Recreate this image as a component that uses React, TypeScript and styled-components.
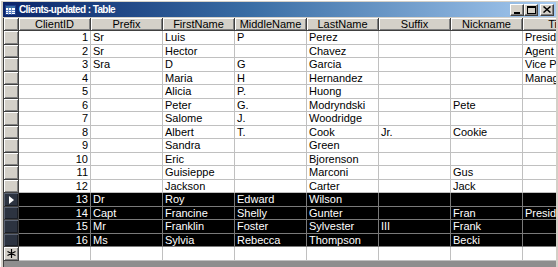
import { createGlobalStyle, styled } from "styled-components";

const GlobalStyle = createGlobalStyle`
  html, body {
    margin: 0;
    padding: 0;
    background: #d4d0c8;
  }
  body {
    font-family: "Liberation Sans", Arial, sans-serif;
    font-size: 11px;
  }
`;

const COLS = "15px repeat(8, 72px)";

const Window = styled.div`
  width: 558px;
  height: 267px;
  box-sizing: border-box;
  padding: 1px 2px 0 2px;
  background: #d4d0c8;
  border-top: 1px solid #ffffff;
  border-left: 1px solid #ffffff;
  display: flex;
  flex-direction: column;
  overflow: hidden;
`;

const TitleBar = styled.div`
  height: 15px;
  flex-shrink: 0;
  display: flex;
  align-items: center;
  padding: 0 2px 0 2px;
  background: linear-gradient(90deg, #0a246a 0%, #3a6ea5 45%, #a6caf0 100%);
  color: #ffffff;
`;

const TitleText = styled.span`
  font-weight: bold;
  font-size: 10px;
  letter-spacing: -0.6px;
  margin-left: 3px;
  white-space: nowrap;
`;

const TitleButtons = styled.div`
  margin-left: auto;
  display: flex;
`;

const WinButton = styled.div<{ $gap?: boolean }>`
  width: 14px;
  height: 12px;
  box-sizing: border-box;
  margin-left: ${(p) => (p.$gap ? "2px" : "0")};
  background: #d4d0c8;
  border-top: 1px solid #ffffff;
  border-left: 1px solid #ffffff;
  border-right: 1px solid #404040;
  border-bottom: 1px solid #404040;
  box-shadow: inset -1px -1px #808080;
  display: flex;
  align-items: center;
  justify-content: center;
`;

const Sheet = styled.div`
  margin-top: 1px;
  flex: 1;
  overflow: hidden;
  background: #8e8e8e;
  border-left: 1px solid #404040;
`;

const Row = styled.div<{ $tall: boolean }>`
  display: grid;
  grid-template-columns: ${COLS};
  height: ${(p) => (p.$tall ? "14px" : "13px")};
`;

const HeaderCell = styled.div`
  box-sizing: border-box;
  background: #d4d0c8;
  border-right: 1px solid #404040;
  border-bottom: 1px solid #404040;
  box-shadow: inset 1px 1px #ffffff, inset -1px -1px #808080;
  text-align: center;
  line-height: 12px;
  color: #000000;
  white-space: nowrap;
  overflow: hidden;
`;

const Selector = styled.div<{ $dark?: boolean }>`
  box-sizing: border-box;
  background: ${(p) => (p.$dark ? "#2c3340" : "#d4d0c8")};
  border-right: 1px solid #404040;
  border-bottom: 1px solid #404040;
  box-shadow: ${(p) =>
    p.$dark
      ? "inset 1px 1px #5a6272, inset -1px -1px #1a1e26"
      : "inset 1px 1px #ffffff, inset -1px -1px #808080"};
  display: flex;
  align-items: center;
  justify-content: center;
`;

const Cell = styled.div<{ $dark?: boolean; $num?: boolean }>`
  box-sizing: border-box;
  background: ${(p) => (p.$dark ? "#000000" : "#ffffff")};
  color: ${(p) => (p.$dark ? "#ffffff" : "#000000")};
  border-right: 1px solid ${(p) => (p.$dark ? "#7a7a7a" : "#c0c0c0")};
  border-bottom: 1px solid ${(p) => (p.$dark ? "#7a7a7a" : "#c0c0c0")};
  text-align: ${(p) => (p.$num ? "right" : "left")};
  padding: 0 2px;
  line-height: 13px;
  white-space: nowrap;
  overflow: hidden;
`;

const headers = [
  "ClientID",
  "Prefix",
  "FirstName",
  "MiddleName",
  "LastName",
  "Suffix",
  "Nickname",
  "Title",
];

const rows: string[][] = [
  ["1", "Sr", "Luis", "P", "Perez", "", "", "President"],
  ["2", "Sr", "Hector", "", "Chavez", "", "", "Agent"],
  ["3", "Sra", "D", "G", "Garcia", "", "", "Vice President"],
  ["4", "", "Maria", "H", "Hernandez", "", "", "Manager"],
  ["5", "", "Alicia", "P.", "Huong", "", "", ""],
  ["6", "", "Peter", "G.", "Modryndski", "", "Pete", ""],
  ["7", "", "Salome", "J.", "Woodridge", "", "", ""],
  ["8", "", "Albert", "T.", "Cook", "Jr.", "Cookie", ""],
  ["9", "", "Sandra", "", "Green", "", "", ""],
  ["10", "", "Eric", "", "Bjorenson", "", "", ""],
  ["11", "", "Guisieppe", "", "Marconi", "", "Gus", ""],
  ["12", "", "Jackson", "", "Carter", "", "Jack", ""],
  ["13", "Dr", "Roy", "Edward", "Wilson", "", "", ""],
  ["14", "Capt", "Francine", "Shelly", "Gunter", "", "Fran", "President"],
  ["15", "Mr", "Franklin", "Foster", "Sylvester", "III", "Frank", ""],
  ["16", "Ms", "Sylvia", "Rebecca", "Thompson", "", "Becki", ""],
];

const TableIcon = () => (
  <svg width="11" height="10" viewBox="0 0 11 10">
    <rect x="0.5" y="0.5" width="10" height="9" fill="#ffffff" stroke="#1c3c8c" />
    <rect x="1" y="1" width="9" height="2" fill="#3a6ea5" />
    <path d="M1 5.5H10M1 7.5H10M3.5 3V9.5M6.5 3V9.5" stroke="#6a8cc8" strokeWidth="1" />
  </svg>
);

const App = () => {
  return (
    <>
      <GlobalStyle />
      <Window>
        <TitleBar>
          <TableIcon />
          <TitleText>Clients-updated : Table</TitleText>
          <TitleButtons>
            <WinButton>
              <svg width="8" height="8" viewBox="0 0 8 8">
                <rect x="1" y="6" width="6" height="2" fill="#000" />
              </svg>
            </WinButton>
            <WinButton>
              <svg width="9" height="8" viewBox="0 0 9 8">
                <rect x="0.5" y="0.5" width="8" height="7" fill="none" stroke="#000" />
                <rect x="0" y="0" width="9" height="2" fill="#000" />
              </svg>
            </WinButton>
            <WinButton $gap>
              <svg width="8" height="7" viewBox="0 0 8 7">
                <path d="M0.5 0.5L7.5 6.5M7.5 0.5L0.5 6.5" stroke="#000" strokeWidth="1.5" />
              </svg>
            </WinButton>
          </TitleButtons>
        </TitleBar>
        <Sheet>
          <Row $tall={false}>
            <HeaderCell />
            {headers.map((h) => (
              <HeaderCell key={h}>{h}</HeaderCell>
            ))}
          </Row>
          {rows.map((r, i) => {
            const dark = i >= 12;
            return (
              <Row key={r[0]} $tall={i % 2 === 0}>
                <Selector $dark={dark}>
                  {i === 12 && (
                    <svg width="5" height="8" viewBox="0 0 5 8">
                      <path d="M0 0L5 4L0 8Z" fill="#ffffff" />
                    </svg>
                  )}
                </Selector>
                {r.map((v, j) => (
                  <Cell key={j} $dark={dark} $num={j === 0}>
                    {v}
                  </Cell>
                ))}
              </Row>
            );
          })}
          <Row $tall={true}>
            <Selector>
              <svg width="9" height="9" viewBox="0 0 9 9">
                <path d="M4.5 0V9M0.5 2.5L8.5 6.5M8.5 2.5L0.5 6.5" stroke="#000" strokeWidth="1.2" />
              </svg>
            </Selector>
            {headers.map((h) => (
              <Cell key={h} />
            ))}
          </Row>
        </Sheet>
      </Window>
    </>
  );
};

export default App;
